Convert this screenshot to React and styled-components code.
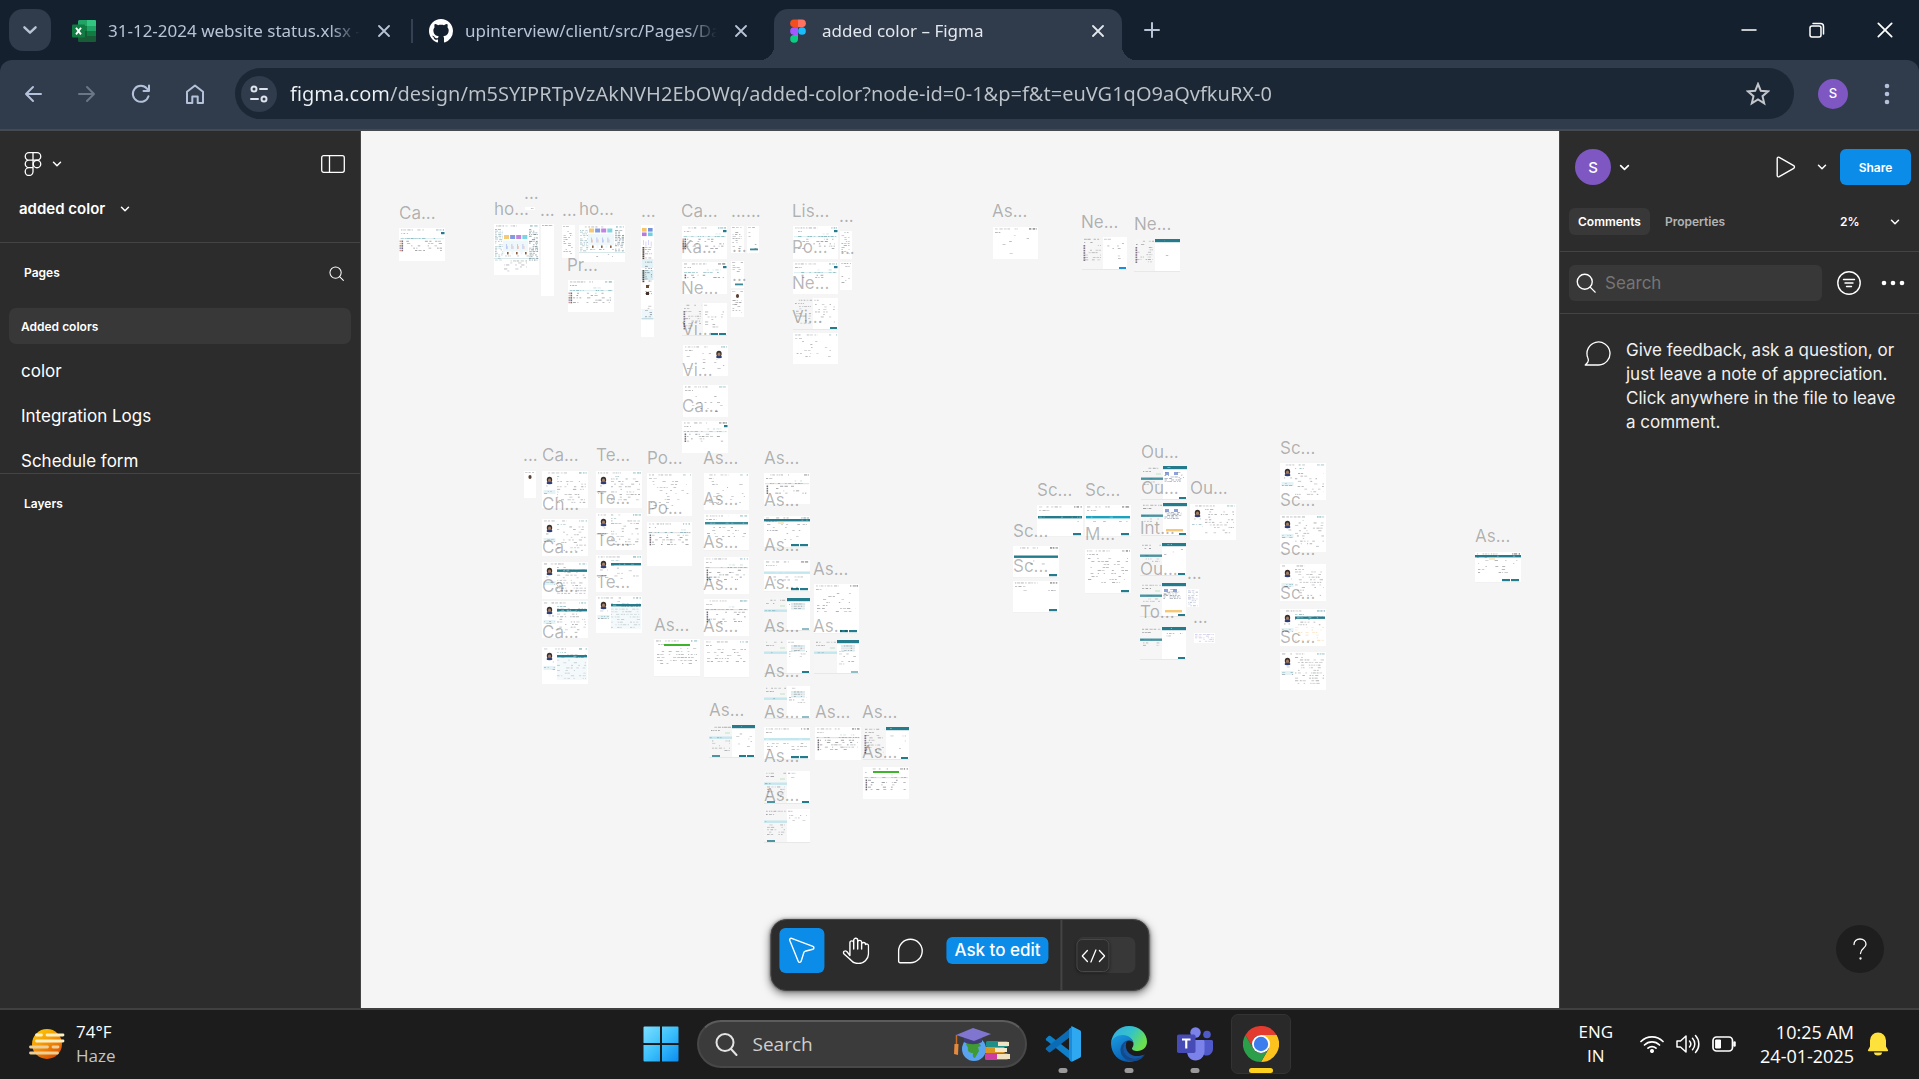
import React from "react";
import styled, { createGlobalStyle } from "styled-components";

const GlobalStyle = createGlobalStyle`
  * { box-sizing: border-box; }
  body { margin: 0; background: #1c1c1c; overflow: hidden; }
  button, input, select { font: inherit; color: inherit; }
  svg { display: block; flex: none; }
`;

const SYSTEM = `"Open Sans", "Noto Sans", sans-serif`;
const CHROME = `"Noto Sans", "Open Sans", sans-serif`;
const UI = `Inter, "Liberation Sans", sans-serif`;

/* ---------- shared ---------- */

const Screen = styled.div`
  height: 100vh;
  display: flex;
  flex-direction: column;
  font-family: ${UI};
`;

const IconButton = styled.button`
  border: 0;
  padding: 0;
  background: ${(p) => p.$bg || "none"};
  width: ${(p) => p.$w || 36}px;
  height: ${(p) => p.$h || 36}px;
  border-radius: ${(p) => p.$radius || 0}px;
  display: flex;
  align-items: center;
  justify-content: center;
  flex: none;
`;

const Icon = ({ w = 24, h = w, box, sw = 1.5, color = "currentColor", children }) => (
  <svg
    width={w}
    height={h}
    viewBox={box || `0 0 ${w} ${h}`}
    fill="none"
    stroke={color}
    strokeWidth={sw}
    strokeLinecap="round"
    strokeLinejoin="round"
    aria-hidden="true"
  >
    {children}
  </svg>
);

const Chevron = ({ w = 10, sw = 1.5 }) => (
  <Icon w={w} h={w} box="0 0 10 10" sw={sw}>
    <path d="M1.500 3.300 5 6.700l3.500-3.400" />
  </Icon>
);

const Cross = ({ w = 12, sw = 1.8 }) => (
  <Icon w={w} box="0 0 12 12" sw={sw}>
    <path d="M1 1l10 10M11 1 1 11" />
  </Icon>
);

/* ---------- browser chrome ---------- */

const TitleBar = styled.header`
  height: 60px;
  flex: none;
  display: flex;
  align-items: flex-start;
  padding: 9px 0 0 9px;
  background: #15202f;
  color: #b9c3d6;
  font-family: ${CHROME};
`;

const TabStrip = styled.nav`
  display: flex;
  gap: 9px;
  margin: 0 9px;
`;

const Tab = styled.div`
  position: relative;
  width: 348px;
  height: 51px;
  padding: 0 12px 8px;
  display: flex;
  align-items: center;
  gap: 12px;
  border-radius: 14px 14px 0 0;
  background: ${(p) => (p.$active ? "#303b4b" : "none")};
  color: ${(p) => (p.$active ? "#e3e7ee" : "#b9c3d6")};

  &::before,
  &::after {
    content: "";
    display: ${(p) => (p.$active ? "block" : "none")};
    position: absolute;
    bottom: 0;
    width: 14px;
    height: 14px;
  }
  &::before {
    right: 100%;
    background: radial-gradient(circle at 0 0, transparent 14px, #303b4b 14px);
  }
  &::after {
    left: 100%;
    background: radial-gradient(circle at 100% 0, transparent 14px, #303b4b 14px);
  }
`;

const TabDivider = styled.i`
  width: 2px;
  height: 24px;
  margin: 10px -5px 0 -6px;
  background: #344154;
`;

const TabTitle = styled.span`
  flex: 1;
  overflow: hidden;
  white-space: nowrap;
  font-size: 17px;
  line-height: 24px;
  mask-image: linear-gradient(to right, #000 88%, transparent 100%);
`;

const WindowControls = styled.div`
  display: flex;
  margin-left: auto;
  color: #fff;
`;

const Toolbar = styled.div`
  background: #15202f;
  flex: none;
  color: #b3c2da;
  font-family: ${CHROME};
`;

const ToolbarInner = styled.div`
  height: 71px;
  display: flex;
  align-items: center;
  padding: 0 14px 2px 6px;
  border-bottom: 2px solid #454a50;
  border-radius: 12px 12px 0 0;
  background: #303b4b;
`;

const AddressBar = styled.div`
  flex: 1;
  height: 51px;
  margin: 0 21px 0 13px;
  padding: 0 18px 0 6px;
  border-radius: 26px;
  background: #1b2734;
  display: flex;
  align-items: center;
  gap: 13px;
`;

const UrlInput = styled.input`
  flex: 1;
  min-width: 0;
  border: 0;
  padding: 0;
  outline: 0;
  font-size: 20px;
  line-height: 30px;
  color: transparent;
  background: linear-gradient(to right, #eef1f5 98px, #bdc3ca 98px);
  background-clip: text;
  -webkit-background-clip: text;
`;

const MenuButton = styled(IconButton)`
  margin-left: 18px;
`;

const Avatar = styled.span`
  width: ${(p) => p.$size}px;
  height: ${(p) => p.$size}px;
  border-radius: 50%;
  background: #7e57c2;
  color: #fff;
  display: flex;
  align-items: center;
  justify-content: center;
  font: 500 ${(p) => p.$font}px/1 ${UI};
`;

const ExcelIcon = () => (
  <svg width="24" height="24" viewBox="0 0 24 24">
    <path d="M7 1h8v6H6V2z" fill="#21a366" />
    <path d="M15 1h8a1 1 0 0 1 1 1v5h-9z" fill="#33c481" />
    <path d="M6 7h9v5H6z" fill="#107c41" />
    <path d="M15 7h9v5h-9z" fill="#21a366" />
    <path d="M6 12h9v6H6z" fill="#185c37" />
    <path d="M15 12h9v5h-9z" fill="#107c41" />
    <path d="M6 17h18v5a1 1 0 0 1-1 1H7a1 1 0 0 1-1-1z" fill="#185c37" />
    <rect x="0" y="5.500" width="13" height="13" rx="1" fill="#107c41" />
    <path d="M4 8.800l5 6.600M9 8.800l-5 6.600" stroke="#fff" strokeWidth="1.900" />
  </svg>
);

const GithubIcon = () => (
  <svg width="24" height="24" viewBox="0 0 16 16" fill="#fff">
    <path d="M8 0C3.580 0 0 3.580 0 8c0 3.540 2.290 6.530 5.470 7.590.4.070.55-.17.55-.38 0-.19-.01-.82-.01-1.490-2.010.37-2.530-.49-2.690-.94-.09-.23-.48-.94-.82-1.130-.28-.15-.68-.52-.01-.53.63-.01 1.080.58 1.230.82.72 1.210 1.870.87 2.330.66.07-.52.28-.87.51-1.070-1.780-.2-3.640-.89-3.640-3.950 0-.87.31-1.590.82-2.150-.08-.2-.36-1.020.08-2.120 0 0 .67-.21 2.200.82.64-.18 1.320-.27 2-.27s1.360.09 2 .27c1.530-1.040 2.200-.82 2.200-.82.44 1.100.16 1.920.08 2.120.51.56.82 1.270.82 2.150 0 3.070-1.870 3.750-3.650 3.950.29.25.54.73.54 1.480 0 1.070-.01 1.930-.01 2.200 0 .21.15.46.55.38A8.010 8.010 0 0 0 16 8c0-4.420-3.580-8-8-8z" />
  </svg>
);

const FigmaColorIcon = () => (
  <svg width="24" height="24" viewBox="0 0 24 24">
    <path d="M8 .5h4v7.700H8a3.850 3.850 0 0 1 0-7.700z" fill="#f24e1e" />
    <path d="M12 .5h4a3.850 3.850 0 0 1 0 7.700h-4z" fill="#ff7262" />
    <path d="M8 8.200h4v7.700H8a3.850 3.850 0 0 1 0-7.700z" fill="#a259ff" />
    <circle cx="16" cy="12" r="3.850" fill="#1abcfe" />
    <path d="M8 15.900h4v3.800a3.900 3.900 0 1 1-4-3.800z" fill="#0acf83" />
  </svg>
);

const TABS = [
  { title: "31-12-2024 website status.xlsx -", icon: <ExcelIcon /> },
  { title: "upinterview/client/src/Pages/Da", icon: <GithubIcon /> },
  { title: "added color – Figma", icon: <FigmaColorIcon />, active: true },
];

function Browser() {
  return (
    <>
      <TitleBar>
        <IconButton $w={42} $h={42} $radius={14} $bg="#303b4b" aria-label="Search tabs">
          <Chevron w={16} />
        </IconButton>
        <TabStrip>
          {TABS.map((t, i) => (
            <React.Fragment key={t.title}>
              {i === 1 && <TabDivider />}
              <Tab $active={t.active}>
                {t.icon}
                <TabTitle>{t.title}</TabTitle>
                <IconButton $w={24} $h={24} aria-label="Close tab">
                  <Cross />
                </IconButton>
              </Tab>
            </React.Fragment>
          ))}
        </TabStrip>
        <IconButton $w={42} $h={42} aria-label="New tab">
          <Icon w={16} sw={2}>
            <path d="M8 1v14M1 8h14" />
          </Icon>
        </IconButton>
        <WindowControls>
          <IconButton $w={68} $h={42} aria-label="Minimise">
            <Icon w={16}>
              <path d="M1 8h14" />
            </Icon>
          </IconButton>
          <IconButton $w={68} $h={42} aria-label="Restore">
            <Icon w={16}>
              <rect x="1" y="4" width="11" height="11" rx="2" />
              <path d="M4 1.500h7.500a3 3 0 0 1 3 3V12" />
            </Icon>
          </IconButton>
          <IconButton $w={68} $h={42} aria-label="Close window">
            <Cross w={16} sw={1.3} />
          </IconButton>
        </WindowControls>
      </TitleBar>
      <Toolbar>
        <ToolbarInner>
          <IconButton $w={54} aria-label="Back">
            <Icon w={18} sw={2}>
              <path d="M17 9H2M9 2 2 9l7 7" />
            </Icon>
          </IconButton>
          <IconButton $w={54} aria-label="Forward">
            <Icon w={18} sw={2} color="#6b7687">
              <path d="M1 9h15M9 2l7 7-7 7" />
            </Icon>
          </IconButton>
          <IconButton $w={54} aria-label="Reload">
            <Icon w={20} sw={2}>
              <path d="M17.500 12.200A8 8 0 1 1 16 4.700l1.700 2M18 1.500v5.500h-5.500" />
            </Icon>
          </IconButton>
          <IconButton $w={54} aria-label="Home">
            <Icon w={20} sw={2}>
              <path d="M2 7.800 10 1.500l8 6.300V19h-5.300v-6.500H7.300V19H2z" />
            </Icon>
          </IconButton>
          <AddressBar>
            <IconButton $radius={18} $bg="#303b4b" aria-label="Site information">
              <Icon w={20} sw={2} color="#dde3ec">
                <circle cx="5" cy="5" r="2.500" />
                <path d="M11 5h7M2 15h7" />
                <circle cx="15" cy="15" r="2.500" />
              </Icon>
            </IconButton>
            <UrlInput
              aria-label="Address"
              spellCheck={false}
              defaultValue="figma.com/design/m5SYIPRTpVzAkNVH2EbOWq/added-color?node-id=0-1&p=f&t=euVG1qO9aQvfkuRX-0"
            />
            <IconButton aria-label="Bookmark this page">
              <Icon w={24} sw={2} color="#c3c7cc">
                <path
                  d="M12 2l2.800 6.800 7.200.6-5.500 4.800 1.700 7.100L12 17.500l-6.200 3.800 1.700-7.100L2 9.400l7.200-.6z"
                  strokeLinejoin="miter"
                />
              </Icon>
            </IconButton>
          </AddressBar>
          <IconButton aria-label="Profile">
            <Avatar $size={30} $font={13}>S</Avatar>
          </IconButton>
          <MenuButton aria-label="Browser menu">
            <svg width="6" height="22" viewBox="0 0 6 22" fill="#b3c2da">
              <circle cx="3" cy="3" r="2.300" />
              <circle cx="3" cy="11" r="2.300" />
              <circle cx="3" cy="19" r="2.300" />
            </svg>
          </MenuButton>
        </ToolbarInner>
      </Toolbar>
    </>
  );
}

/* ---------- editor shell ---------- */

const Editor = styled.main`
  flex: 1;
  min-height: 0;
  display: flex;
  color: #fff;
`;

const SidePanel = styled.aside`
  width: ${(p) => (p.$side === "left" ? 361 : 360)}px;
  flex: none;
  display: flex;
  flex-direction: column;
  background: #2c2c2c;
  border: 0 solid #444;
  border-${(p) => (p.$side === "left" ? "right" : "left")}-width: 1px;
`;

const Row = styled.div`
  display: flex;
  align-items: center;
  justify-content: ${(p) => (p.$spread ? "space-between" : "flex-start")};
  gap: ${(p) => p.$gap || 0}px;
`;

const FileHead = styled.div`
  height: 112px;
  flex: none;
  border-bottom: 1px solid #444;
  padding: 15px 9px 0 19px;
`;

const MenuTrigger = styled.button`
  border: 0;
  padding: 0;
  background: none;
  display: flex;
  align-items: center;
  gap: ${(p) => p.$gap || 10}px;
  height: 36px;
  padding-left: ${(p) => p.$indent || 0}px;
`;

const FileName = styled.span`
  font-size: 15px;
  font-weight: 600;
  line-height: 24px;
`;

const FileRow = styled(Row)`
  margin-top: 9px;
`;

const PagesSection = styled.section`
  height: 231px;
  flex: none;
  overflow: hidden;
  border-bottom: 1px solid #444;
`;

const SectionHead = styled.div`
  height: 60px;
  padding: 0 11px 0 24px;
  display: flex;
  align-items: center;
  justify-content: space-between;
`;

const SectionTitle = styled.h2`
  margin: 0;
  font-size: 12px;
  font-weight: 600;
  line-height: 24px;
`;

const PageList = styled.ul`
  list-style: none;
  margin: 0;
  padding: 5px 9px 0;
  display: flex;
  flex-direction: column;
  gap: 9px;
`;

const PageItem = styled.button`
  display: block;
  width: 100%;
  height: 36px;
  border: 0;
  padding: 0 12px;
  text-align: left;
  border-radius: 7px;
  background: ${(p) => (p.$active ? "#383838" : "none")};
  font-size: ${(p) => (p.$active ? 12 : 17)}px;
  font-weight: ${(p) => (p.$active ? 600 : 400)};
`;

const SearchGlyph = ({ w = 15, sw = 1.1 }) => (
  <Icon w={w} box="0 0 16 16" sw={sw}>
    <circle cx="7" cy="7" r="6" />
    <path d="m11.300 11.300 4 4" />
  </Icon>
);

function LeftPanel() {
  return (
    <SidePanel $side="left">
      <FileHead>
        <Row $spread>
          <MenuTrigger $gap={10} $indent={5} aria-label="Main menu">
            <Icon w={18} h={24} sw={1.3}>
              <path d="M9 .7H5a3.750 3.750 0 0 0 0 7.500h4zM9 .7h4a3.750 3.750 0 0 1 0 7.500H9zM9 8.200H5a3.750 3.750 0 0 0 0 7.500h4zM5 15.700h4v3.800a3.900 3.900 0 1 1-4-3.800z" />
              <circle cx="13" cy="12" r="3.750" />
            </Icon>
            <Chevron />
          </MenuTrigger>
          <IconButton aria-label="Toggle panels">
            <Icon w={24} h={18} sw={1.3}>
              <rect x=".7" y=".7" width="22.600" height="16.600" rx="2" />
              <path d="M8.500 1v16" />
            </Icon>
          </IconButton>
        </Row>
        <FileRow>
          <MenuTrigger $gap={15}>
            <FileName>added color</FileName>
            <Chevron />
          </MenuTrigger>
        </FileRow>
      </FileHead>
      <PagesSection>
        <SectionHead>
          <SectionTitle>Pages</SectionTitle>
          <IconButton $w={26} aria-label="Find">
            <SearchGlyph />
          </IconButton>
        </SectionHead>
        <PageList>
          {["Added colors", "color", "Integration Logs", "Schedule form"].map((p, i) => (
            <li key={p}>
              <PageItem $active={i === 0}>{p}</PageItem>
            </li>
          ))}
        </PageList>
      </PagesSection>
      <SectionHead>
        <SectionTitle>Layers</SectionTitle>
      </SectionHead>
    </SidePanel>
  );
}

const RightHead = styled.div`
  height: 121px;
  flex: none;
  border-bottom: 1px solid #444;
  padding: 18px 8px 0 9px;
`;

const ShareButton = styled.button`
  width: 71px;
  height: 36px;
  border: 0;
  border-radius: 6px;
  background: #0c8ce9;
  font-size: 12px;
  font-weight: 600;
`;

const TabRow = styled(Row)`
  margin-top: 23px;
`;

const PanelTab = styled.button`
  height: 27px;
  border: 0;
  padding: 0 9px;
  border-radius: 6px;
  background: ${(p) => (p.$active ? "#383838" : "none")};
  color: ${(p) => (p.$active ? "#fff" : "#b3b3b3")};
  font-size: 12px;
  font-weight: 600;
`;

const ZoomField = styled.label`
  display: flex;
  align-items: center;
  gap: 30px;
  padding-right: 11px;
`;

const ZoomSelect = styled.select`
  appearance: none;
  border: 0;
  padding: 0;
  background: none;
  font-size: 12px;
  font-weight: 600;
  line-height: 24px;
`;

const SearchRow = styled(Row)`
  height: 62px;
  flex: none;
  padding: 0 0 0 9px;
  border-bottom: 1px solid #444;
`;

const SearchField = styled.label`
  flex: 1;
  min-width: 0;
  height: 36px;
  margin-right: 9px;
  padding: 0 7px;
  border-radius: 6px;
  background: #383838;
  display: flex;
  align-items: center;
  gap: 9px;
`;

const SearchInput = styled.input`
  flex: 1;
  min-width: 0;
  border: 0;
  padding: 0;
  outline: 0;
  background: none;
  font-size: ${(p) => p.$size || 17}px;
  &::placeholder {
    color: ${(p) => p.$placeholder || "#757575"};
    opacity: 1;
  }
`;

const EmptyState = styled.div`
  display: flex;
  align-items: flex-start;
  gap: 15px;
  padding: 24px 16px 0 24px;
`;

const EmptyText = styled.p`
  margin: 0;
  font-size: 17px;
  line-height: 24px;
  color: #f0f0f0;
`;

const BubbleBox = styled.span`
  padding-top: 3px;
`;

const HelpCorner = styled.div`
  margin: auto 35px 35px auto;
`;

const PlayGroup = styled.div`
  display: flex;
  align-items: center;
  margin-left: auto;
`;

function RightPanel() {
  return (
    <SidePanel $side="right">
      <RightHead>
        <Row>
          <MenuTrigger $gap={8} $indent={6} aria-label="Account">
            <Avatar $size={36} $font={15}>S</Avatar>
            <Chevron w={11} />
          </MenuTrigger>
          <PlayGroup>
            <IconButton aria-label="Present">
              <Icon w={20} h={22} sw={1.4}>
                <path d="M1.200 2.500v17c0 1.200 1 1.700 2 1.200l14.500-8.400c1-.6 1-2 0-2.600L3.200 1.300c-1-.5-2 0-2 1.200z" />
              </Icon>
            </IconButton>
            <IconButton aria-label="Present options">
              <Chevron />
            </IconButton>
            <ShareButton>Share</ShareButton>
          </PlayGroup>
        </Row>
        <TabRow $spread>
          <Row $gap={6}>
            <PanelTab $active>Comments</PanelTab>
            <PanelTab>Properties</PanelTab>
          </Row>
          <ZoomField>
            <ZoomSelect aria-label="Zoom level" defaultValue="2%">
              <option>2%</option>
            </ZoomSelect>
            <Chevron />
          </ZoomField>
        </TabRow>
      </RightHead>
      <SearchRow>
        <SearchField>
          <SearchGlyph w={20} />
          <SearchInput placeholder="Search" aria-label="Search comments" />
        </SearchField>
        <IconButton aria-label="Filter">
          <Icon w={24} sw={1.4}>
            <circle cx="12" cy="12" r="11.200" />
            <path d="M6.500 8.500h11M8 12h8M9.500 15.500h5" />
          </Icon>
        </IconButton>
        <IconButton $w={52} aria-label="More">
          <svg width="24" height="6" viewBox="0 0 24 6" fill="#fff">
            <circle cx="3" cy="3" r="2.300" />
            <circle cx="12" cy="3" r="2.300" />
            <circle cx="21" cy="3" r="2.300" />
          </svg>
        </IconButton>
      </SearchRow>
      <EmptyState>
        <BubbleBox>
          <Icon w={27} h={25} sw={1.3}>
            <path d="M3.700 16.500A11.500 11.500 0 1 1 14.800 24H1.200c1.900-1.400 3.200-3 3.200-4.700 0-1-.3-1.800-.7-2.800z" />
          </Icon>
        </BubbleBox>
        <EmptyText>
          Give feedback, ask a question, or just leave a note of appreciation. Click anywhere in the file to leave a
          comment.
        </EmptyText>
      </EmptyState>
      <HelpCorner>
        <IconButton $w={48} $h={48} $radius={24} $bg="#1e1e1e" aria-label="Help">
          <Icon w={14} h={22} sw={1.3}>
            <path d="M1 6.500C1 3.200 3.500 1 7 1s6 2.200 6 5.300C13 10.500 7.500 10 7.500 15.500" />
            <circle cx="7.500" cy="20.500" r=".5" />
          </Icon>
        </IconButton>
      </HelpCorner>
    </SidePanel>
  );
}

/* ---------- canvas ---------- */

const Canvas = styled.section`
  position: relative;
  flex: 1;
  min-width: 0;
  overflow: hidden;
  background: #f5f5f5;
`;

const FrameNode = styled.svg`
  position: absolute;
  left: ${(p) => p.$x}px;
  top: ${(p) => p.$y}px;
  background: #fff;
`;

const FrameLabel = styled.span`
  position: absolute;
  left: ${(p) => p.$x}px;
  top: ${(p) => p.$y}px;
  font-size: 17px;
  line-height: 24px;
  color: rgba(0, 0, 0, 0.29);
  white-space: nowrap;
`;

const TEAL = "#237b8b";
const DARK = "#4a4f55";
const PALE = "#d8ecf0";

function makeRandom(seed) {
  let s = (seed * 7919 + 13) % 2147483647;
  return () => {
    s = (s * 16807) % 2147483647;
    return s / 2147483647;
  };
}

/* Thin broken strokes that stand for unreadable text. */
function textLine(rand, x, y, w, density, color, opacity, key) {
  const bits = [];
  let cx = x;
  let n = 0;
  while (cx < x + w) {
    const len = 1 + rand() * 2.4;
    if (rand() < density)
      bits.push(
        <rect
          key={`${key}-${n}`}
          x={cx}
          y={y}
          width={Math.min(len, x + w - cx)}
          height="0.9"
          fill={color}
          opacity={opacity * (0.5 + rand() * 0.5)}
        />
      );
    cx += len + 0.5 + rand() * 1.2;
    n += 1;
  }
  return bits;
}

const AVATAR_ROW = ["#c9785f", "#e8a14c", "#7f5a4c", "#5c6ca8", "#d6605f"];

function drawFrame(kind, w, h, seed, opt) {
  const r = makeRandom(seed);
  const out = [];
  const line = (x, y, lw, d = 0.6, c = DARK, o = 0.5) => out.push(...textLine(r, x, y, lw, d, c, o, out.length));
  const box = (x, y, bw, bh, fill, opacity = 1) =>
    out.push(<rect key={`b${out.length}`} x={x} y={y} width={bw} height={bh} fill={fill} opacity={opacity} />);
  const oval = (cx, cy, rx, ry, fill) =>
    out.push(<ellipse key={`e${out.length}`} cx={cx} cy={cy} rx={rx} ry={ry} fill={fill} />);
  const head = () => {
    line(2, 1.5, w * 0.5, 0.8);
    line(w - 9, 1.5, 8, 0.9, opt.dark ? "#000" : TEAL, 0.8);
  };
  const face = (x, y) => {
    oval(x + 3, y + 2.8, 2.7, 3, "#3a302c");
    oval(x + 3, y + 3.4, 1.5, 2, "#a87e62");
    oval(x + 3, y + 6, 3, 1.3, "#2d3f74");
  };

  if (kind === "table") {
    head();
    line(2, 5, 7, 0.9);
    if (opt.button) box(w - 4, 4, 3.5, 2.2, TEAL);
    line(w * 0.55, 7.5, 14, 0.5, TEAL, 0.3);
    box(1, 10, w - 2, 1.2, opt.band || PALE, 0.8);
    line(2, 10, w - 4, 0.7, TEAL, 0.5);
    const rows = opt.rows || 5;
    const people = opt.color || opt.band === "#ddd" || opt.dark;
    for (let i = 0; i < rows; i += 1) {
      const y = 12.5 + i * 2.3;
      if (opt.color) box(0.5, y, 1.8, 1.5, AVATAR_ROW[i % 5], 0.7);
      if (people) box(2.6, y, 1.5, 1.6, "#54495a", 0.8);
      line(5, y + 0.3, w - 8, 0.35, DARK, 0.6);
    }
    if (opt.green) box(10, 4, 26, 2, "#3fb32c");
  } else if (kind === "page") {
    head();
    line(2, 5, 8, 0.8);
    for (let y = 8; y < h - 5; y += 3) line(3 + r() * 3, y, w - 9, opt.d || 0.28, DARK, 0.45);
    if (opt.face) face(w - 12, 6);
  } else if (kind === "dash") {
    head();
    for (let y = 5; y < h * 0.7; y += 1.7) {
      line(1, y, 8, 0.8, "#5d8f9b", 0.6);
      line(w - 10, y, 9, 0.8, "#3b5964", 0.7);
    }
    const top = opt.swap ? 3.5 : 11;
    ["#f4c467", "#7790dc", "#b878dc", "#6fd0e0"].forEach((c, i) => box(10 + i * 6.1, top, 5, 4, c, 0.9));
    box(9, top + 5.5, w - 20, 14, "#eef7f9");
    for (let i = 0; i < 4; i += 1) {
      box(12 + i * 5.5, top + 9, 0.8, 5, "#9aa5ec", 0.7);
      box(13.2 + i * 5.5, top + 11, 0.7, 3, "#e9a89a", 0.7);
    }
    for (let i = 0; i < 3; i += 1) {
      box(10.5 + i * 9, top + 16.5, 7, 6, "#fff");
      box(13 + i * 9, top + 17, 1.6, 2.4, "#8a5f3d");
      line(11 + i * 9, top + 20.5, 6, 0.9);
    }
    box(0, top + 23.5, w, 0.5, TEAL, 0.35);
    for (let y = top + 25.5; y < Math.min(h - 4, top + 36); y += 2) line(10, y, w - 22, 0.3);
  } else if (kind === "mobile") {
    line(1, 1, w - 2, 0.7, DARK, 0.5);
    if (opt.face) oval(w / 2, 6, 1.6, 2, "#5a4032");
    for (let y = opt.face ? 10 : 4; y < h - 4; y += 2) line(1.5, y, w - 4, opt.d || 0.45, DARK, 0.55);
    if (opt.button) box(w - 9, h - 4.5, 8, 1.8, TEAL, 0.9);
  } else if (kind === "long") {
    ["#f4c467", "#7790dc", "#b878dc", "#6fd0e0"].forEach((c, i) =>
      box(1 + (i % 2) * 6, 3 + Math.floor(i / 2) * 4.5, 4.6, 3.6, c)
    );
    for (let i = 0; i < 4; i += 1) box(2 + i * 2.6, 15 + (i % 2) * 1.5, 0.7, 5, "#a7a0ec", 0.6);
    box(0.5, 34, w - 1, 9, "#e3f2f6");
    box(0.5, 45, w - 1, 10, "#d9edf2");
    box(0.5, 84, w - 1, 9, "#edf6fa");
    for (let y = 22; y < 92; y += 2.1) {
      line(4, y, w - 6, 0.5, y > 44 && y < 56 ? "#245" : DARK, 0.6);
      if ((y > 21 && y < 33) || (y > 44 && y < 56)) box(1.5, y, 1.8, 1.6, "#54423a");
    }
    box(5, 60, 3, 3, "#6b4a35");
    box(5, 67, 3, 3, "#42302a");
    box(0.5, 93.5, w - 1, 0.7, "#86b9c4");
  } else if (kind === "split") {
    const mid = opt.mid || w * 0.5;
    box(0, 0, mid, h - 1, "#f6f6f6");
    line(2, 1.8, mid - 3, 0.7);
    line(2, 5, 9, 0.9, DARK, 0.6);
    if (opt.band) {
      box(0, 11.5, mid, 2.4, opt.band);
      line(1, 12.2, mid * 0.5, 0.5, TEAL, 0.5);
      if (r() > 0.3) box(mid - 7, 7.5, 5, 1, "#a8dcae", 0.7);
    }
    for (let y = opt.band ? 15.5 : 8; y < (opt.left || h - 7); y += 2.4) {
      line(3, y, mid - 5, 0.5, DARK, 0.45);
      if (opt.people) box(1.5, y, 1.7, 1.6, "#77667e", 0.9);
    }
    if (opt.header) {
      box(mid, 0, w - mid, 3.2, TEAL);
      line(mid + 2, 1, 8, 0.5, "#fff", 0.6);
    } else line(mid + 1, 1.8, 8, 0.8);
    for (let y = 6; y < (opt.right || h - 8); y += 2.5) line(mid + 2, y, w - mid - 5, opt.d || 0.3, DARK, 0.45);
    if (opt.panel) {
      for (let i = 0; i < 3; i += 1) {
        box(mid + 4, 5 + i * 2.3, 14, 1.9, i % 2 ? "#e6e6e6" : PALE);
        line(mid + 7, 5.5 + i * 2.3, 8, 0.8, DARK, 0.5);
      }
    }
    if (opt.cards) {
      box(mid + 2, 6, 4, 3, "#6079c9", 0.7);
      box(mid + 11, 6, 4, 3, "#6079c9", 0.7);
      for (let y = 9; y < 16; y += 1.5) line(mid + 1.5, y, 17, 0.75, "#40506e", 0.6);
    }
    if (opt.orange) box(mid + 3, h - 7, 17, 2.4, "#f5c878");
    const b = opt.button || TEAL;
    if (opt.buttons === 2) box(w - 16, h - 3, 7, 2, b);
    if (opt.buttons) box(w - 8, h - 3, 7, 2, b, opt.soft ? 0.5 : 1);
    if (opt.leftButton) box(3, h - 3, 8, 2, TEAL, 0.8);
    box(0, h - 0.6, w, 0.6, "#d9d9d9");
  } else if (kind === "profile") {
    head();
    face(4.5, 6);
    line(4, 14.5, 8, 0.5, DARK, 0.5);
    if (!opt.plain) box(1.5, 19, 12, 4, "#e6f3f6");
    line(2, 20, 11, 0.6, TEAL, 0.45);
    line(2, 22, 11, 0.5, DARK, 0.5);
    line(15, 5, 9, 0.7, TEAL, 0.5);
    for (let y = 7.5; y < h - 6; y += 2.6)
      line(15, y, w - 17, opt.d || 0.4, opt.warm && y > 16 ? "#f0b65e" : DARK, 0.5);
    if (opt.bar) {
      box(15, opt.bar, w - 16, 2.4, TEAL);
      line(17, opt.bar + 0.8, w - 22, 0.2, "#9cc8d0", 1);
    }
    if (opt.tint) box(15, opt.bar + 3, w - 16, 22, "#e3f2f5", 0.4);
  } else if (kind === "form") {
    head();
    line(2, 5, 11, 0.85);
    if (opt.bar) {
      box(opt.inset || 0, opt.bar, w - 2 * (opt.inset || 0), 2.4, opt.fill || TEAL);
      line(2, opt.bar + 0.7, w - 4, 0.15, "#fff", 0.5);
    }
    for (let y = (opt.bar || 4) + 5; y < (opt.end || h - 8); y += 3) line(3, y, w - 6, opt.d || 0.2, DARK, 0.5);
    if (opt.green) box(10, opt.green, 26, 2, "#3fb32c");
    if (opt.orange) box(14, 6.5, 6, 1, "#f5d58a");
    if (opt.buttons === 2) box(w - 19, h - 4, 8, 2.2, TEAL);
    if (opt.buttons) box(w - 10, h - 4, 8, 2.2, TEAL);
    box(0, h - 0.5, w, 0.5, "#e2e2e2");
  } else if (kind === "scribble") {
    for (let y = 1; y < h - 1; y += 1.7) line(1, y, w - 2, 0.75, opt.ink || "#5b6fa0", 0.5);
  }
  return out;
}

const SKY = "#c4e6ee";

/* x, y, width, height, kind, options */
const FRAMES = [
  [399, 228, 46, 33, "table", { color: 1, button: 1 }],
  [494, 224, 45, 51, "dash", {}],
  [525, 207, 10, 3, "scribble", { ink: DARK }],
  [541, 224, 13, 72, "mobile", { d: 0.02 }],
  [562, 225, 13, 33, "mobile", {}],
  [579, 225, 46, 37, "dash", { swap: 1 }],
  [568, 280, 46, 32, "table", { color: 1 }],
  [641, 225, 13, 112, "long", {}],
  [682, 226, 45, 33, "table", { color: 1, button: 1 }],
  [731, 226, 13, 27, "mobile", {}],
  [747, 226, 12, 27, "mobile", { d: 0.15, button: 1 }],
  [682, 262, 45, 32, "table", { rows: 2, button: 1, dark: 1, band: "#fff" }],
  [731, 261, 13, 27, "mobile", { button: 1, d: 0.2 }],
  [731, 290, 13, 27, "mobile", { face: 1 }],
  [682, 303, 45, 33, "split", { mid: 21, people: 1, buttons: 2 }],
  [683, 345, 45, 31, "page", { d: 0.18, face: 1 }],
  [683, 385, 45, 32, "page", { d: 0.15 }],
  [682, 421, 46, 32, "table", { button: 1, dark: 1, rows: 4 }],
  [793, 226, 45, 33, "table", { button: 1 }],
  [840, 231, 12, 28, "mobile", {}],
  [793, 262, 45, 32, "table", { button: 1, rows: 2 }],
  [840, 262, 12, 28, "mobile", { d: 0.15 }],
  [793, 298, 45, 32, "split", { mid: 20, buttons: 1 }],
  [793, 333, 45, 31, "page", {}],
  [524, 471, 12, 27, "mobile", { face: 1, d: 0.02 }],
  [542, 471, 46, 37, "profile", {}],
  [542, 519, 46, 37, "profile", {}],
  [542, 562, 46, 37, "profile", { bar: 7.5, d: 0.6 }],
  [542, 601, 46, 37, "profile", { bar: 8 }],
  [542, 647, 46, 37, "profile", { bar: 8, tint: 1 }],
  [596, 471, 46, 37, "profile", { plain: 1 }],
  [596, 513, 46, 37, "profile", { plain: 1 }],
  [596, 555, 46, 37, "profile", { bar: 8, plain: 1, d: 0.1 }],
  [596, 596, 46, 37, "profile", { bar: 8, tint: 1, d: 0.5 }],
  [647, 473, 45, 43, "page", {}],
  [647, 522, 45, 44, "table", { band: "#ddd", rows: 5 }],
  [704, 473, 45, 37, "page", { d: 0.2 }],
  [704, 514, 45, 37, "form", { bar: 8, inset: 1, fill: "#3a8a99", end: 24, d: 0.3 }],
  [704, 557, 45, 37, "table", { band: "#ddd" }],
  [704, 599, 45, 37, "table", { band: "#ddd" }],
  [704, 640, 45, 38, "form", { end: 24, d: 0.5 }],
  [654, 639, 46, 38, "form", { green: 5, end: 26, d: 0.6 }],
  [764, 473, 46, 31, "table", { dark: 1, band: "#ddd", rows: 4 }],
  [764, 516, 46, 32, "form", { bar: 3, orange: 1, buttons: 2 }],
  [764, 560, 46, 32, "form", { bar: 11.5, fill: SKY, dark: 1, end: 20, buttons: 2 }],
  [764, 598, 46, 33, "split", { mid: 23, header: 1, panel: 1, band: SKY, buttons: 1, soft: 1, left: 14, right: 8 }],
  [764, 640, 46, 34, "split", { mid: 23, panel: 1, band: SKY, buttons: 1, left: 14, right: 20 }],
  [764, 686, 46, 33, "split", { mid: 23, panel: 1, band: SKY, buttons: 1, soft: 1, left: 14, right: 18 }],
  [764, 727, 46, 33, "form", { bar: 11, fill: SKY, dark: 1, d: 0.5, buttons: 2 }],
  [764, 771, 46, 33, "split", { mid: 23, band: SKY, buttons: 1, leftButton: 1, right: 10 }],
  [764, 809, 46, 34, "split", { mid: 23, band: SKY, leftButton: 1, right: 12 }],
  [814, 584, 45, 50, "form", { end: 28, buttons: 2, dark: 1 }],
  [814, 640, 45, 34, "split", { mid: 23, header: 1, panel: 1, band: SKY, buttons: 1, soft: 1, left: 14, right: 24 }],
  [709, 725, 46, 33, "split", { mid: 23, header: 1, band: SKY, buttons: 2, leftButton: 1, d: 0.1 }],
  [815, 727, 46, 33, "table", { dark: 1, band: "#ddd" }],
  [863, 727, 46, 33, "split", { mid: 23, header: 1, people: 1, buttons: 1, d: 0.08 }],
  [863, 767, 46, 32, "table", { dark: 1, band: "#e4e4e4", green: 1 }],
  [993, 227, 45, 32, "page", { d: 0.06, dark: 1 }],
  [1082, 237, 45, 33, "split", { mid: 21, people: 1, buttons: 1, button: "#1a8fd8", d: 0.15, left: 23 }],
  [1134, 239, 46, 33, "split", { mid: 21, people: 1, header: 1, d: 0.03, left: 24 }],
  [1037, 505, 46, 32, "form", { bar: 11, inset: 1, end: 18, dark: 1, buttons: 1 }],
  [1085, 505, 46, 32, "form", { bar: 11, inset: 1, fill: "#1ba3bf", end: 18, dark: 1, buttons: 1 }],
  [1013, 546, 46, 32, "form", { bar: 9.5, inset: 1, end: 18, dark: 1, buttons: 1 }],
  [1013, 581, 46, 32, "form", { end: 10, dark: 1, buttons: 1 }],
  [1085, 549, 46, 45, "form", { end: 36, d: 0.3, dark: 1, buttons: 1 }],
  [1141, 466, 46, 34, "split", { mid: 22, header: 1, band: "#4b93a1", cards: 1, buttons: 1, left: 20, right: 12 }],
  [1141, 503, 46, 33, "split", { mid: 22, header: 1, band: "#4b93a1", cards: 1, orange: 1, buttons: 1, left: 20, right: 12 }],
  [1140, 543, 46, 33, "split", { mid: 22, header: 1, band: "#4b93a1", buttons: 1, left: 20, right: 12 }],
  [1140, 583, 46, 34, "split", { mid: 22, header: 1, band: "#4b93a1", cards: 1, orange: 1, buttons: 1, left: 20, right: 12 }],
  [1140, 627, 46, 33, "split", { mid: 22, header: 1, band: "#4b93a1", buttons: 1, left: 20, right: 10 }],
  [1190, 504, 46, 36, "profile", { plain: 1 }],
  [1187, 589, 12, 18, "scribble", {}],
  [1194, 633, 21, 10, "scribble", { ink: "#9d8fd0" }],
  [1280, 463, 46, 37, "profile", { d: 0.3 }],
  [1280, 515, 46, 37, "profile", { d: 0.35 }],
  [1280, 564, 46, 37, "profile", { d: 0.4 }],
  [1280, 609, 46, 37, "profile", { bar: 7.5, warm: 1, d: 0.35 }],
  [1280, 652, 46, 38, "profile", { d: 0.6 }],
  [1475, 552, 46, 31, "form", { bar: 3, orange: 1, dark: 1, buttons: 2 }],
];

/* text, x, y of the label's middle line */
const LABELS = [
  ["Ca...", 399, 213], ["ho...", 494, 209], ["...", 524, 193], ["...", 540, 210], ["...", 562, 210],
  ["ho...", 579, 209], ["Pr...", 567, 265], ["...", 641, 211], ["Ca...", 681, 211], ["...", 731, 211],
  ["...", 746, 211], ["Ka...", 681, 247], ["...", 732, 246], ["Ne...", 681, 288], ["...", 732, 275],
  ["Vi...", 682, 329], ["Vi...", 682, 370], ["Ca...", 682, 406], ["Lis...", 792, 211], ["...", 839, 216],
  ["Po...", 792, 247], ["...", 840, 248], ["Ne...", 792, 283], ["Vi...", 792, 317],
  ["...", 523, 455], ["Ca...", 542, 455], ["Ch...", 542, 504], ["Ca...", 542, 547], ["Ca...", 542, 586],
  ["Ca...", 542, 632], ["Te...", 596, 455], ["Te...", 596, 498], ["Te...", 596, 540], ["Te...", 596, 582],
  ["Po...", 647, 458], ["Po...", 647, 508], ["As...", 703, 458], ["As...", 703, 499], ["As...", 703, 542],
  ["As...", 703, 584], ["As...", 703, 626], ["As...", 654, 625], ["As...", 764, 458], ["As...", 764, 500],
  ["As...", 764, 545], ["As...", 764, 583], ["As...", 764, 626], ["As...", 764, 671], ["As...", 764, 712],
  ["As...", 764, 756], ["As...", 764, 795], ["As...", 813, 569], ["As...", 813, 626], ["As...", 709, 710],
  ["As...", 815, 712], ["As...", 862, 712], ["As...", 862, 752], ["As...", 992, 211], ["Ne...", 1081, 222],
  ["Ne...", 1134, 224], ["Sc...", 1037, 490], ["Sc...", 1085, 490], ["Sc...", 1013, 531], ["Sc...", 1013, 566],
  ["M...", 1085, 534], ["Ou...", 1141, 452], ["Ou...", 1141, 488], ["Int...", 1140, 528], ["Ou...", 1140, 569],
  ["To...", 1140, 612], ["Ou...", 1190, 488], ["...", 1187, 573], ["...", 1193, 617], ["Sc...", 1280, 448],
  ["Sc...", 1280, 500], ["Sc...", 1280, 549], ["Sc...", 1280, 593], ["Sc...", 1280, 637], ["As...", 1475, 536],
];

const ORIGIN = { x: 361, y: 131 };

const Dock = styled.div`
  position: absolute;
  left: 50%;
  bottom: 17px;
  transform: translateX(-50%);
  height: 72px;
  display: flex;
  border-radius: 16px;
  background: #2c2c2c;
  border: 1px solid #454545;
  box-shadow: 0 3px 8px rgba(0, 0, 0, 0.5), 0 0 3px rgba(0, 0, 0, 0.4);
`;

const DockTools = styled.div`
  display: flex;
  align-items: flex-start;
  gap: 9px;
  padding: 8px 12px 0 8px;
  border-right: 2px solid #444;
`;

const AskButton = styled.button`
  height: 27px;
  margin: 9px 0 0 5px;
  padding: 0 8px;
  border: 0;
  border-radius: 6px;
  background: #0c8ce9;
  font-size: 17px;
  font-weight: 500;
  line-height: 27px;
`;

const DevToggle = styled.label`
  position: relative;
  width: 59px;
  height: 36px;
  margin: 17px 13px 0 14px;
`;

const DevInput = styled.input`
  appearance: none;
  display: block;
  width: 59px;
  height: 36px;
  margin: 0;
  border-radius: 7px;
  background: #383838;
`;

const DevKnob = styled.span`
  position: absolute;
  left: 0;
  top: 2px;
  width: 33px;
  height: 33px;
  display: flex;
  align-items: center;
  justify-content: center;
  border-radius: 6px;
  border: 1px solid #484848;
  background: #2c2c2c;
  box-shadow: 0 1px 3px rgba(0, 0, 0, 0.4);
`;

function CanvasArea() {
  return (
    <Canvas>
      {FRAMES.map(([x, y, w, h, kind, opt], i) => (
        <FrameNode key={`${x}-${y}`} $x={x - ORIGIN.x} $y={y - ORIGIN.y} width={w} height={h} viewBox={`0 0 ${w} ${h}`}>
          {drawFrame(kind, w, h, i + 3, opt)}
        </FrameNode>
      ))}
      {LABELS.map(([text, x, y]) => (
        <FrameLabel key={`${x}-${y}`} $x={x - ORIGIN.x} $y={y - ORIGIN.y - 12}>
          {text}
        </FrameLabel>
      ))}
      <Dock>
        <DockTools>
          <IconButton $w={45} $h={45} $radius={6} $bg="#0c8ce9" aria-label="Move">
            <Icon w={27} sw={1.4}>
              <path d="M1.300 3.200c-.4-1.200.7-2.300 1.900-1.900l21.300 8.100c1.400.6 1.300 2.500-.1 2.900l-7.700 2c-.6.200-1 .5-1.200 1.100l-2.800 8.900c-.4 1.300-2.300 1.400-2.800.1z" />
            </Icon>
          </IconButton>
          <IconButton $w={45} $h={45} aria-label="Hand tool">
            <Icon w={27} sw={1.4}>
              <path d="M7.500 15V5.800a1.900 1.900 0 0 1 3.800 0v-2.500a2 2 0 0 1 4 0v2a1.900 1.900 0 0 1 3.900 0v2.200a1.900 1.900 0 0 1 3.900 0a1.800 1.800 0 0 1 3 1v8.500a10 10 0 0 1-10 9.500c-4 0-6.500-1.500-8.800-4.500L1.400 16.700c-1.200-2 1.200-3.700 3-2.200l3.100 4zM11.300 5.500V12M15.300 4.500V12M19.200 5.500V12" />
            </Icon>
          </IconButton>
          <IconButton $w={45} $h={45} aria-label="Comment">
            <Icon w={26} sw={1.4}>
              <path d="M1.200 13A11.800 11.800 0 1 1 13 24.800H2.700c-.8 0-1.500-.7-1.500-1.500z" />
            </Icon>
          </IconButton>
          <AskButton>Ask to edit</AskButton>
        </DockTools>
        <DevToggle>
          <DevInput type="checkbox" aria-label="Dev Mode" />
          <DevKnob>
            <Icon w={24} h={14} sw={1.3}>
              <path d="M6 1.500.8 7 6 12.500M18 1.500 23.200 7 18 12.500M14.500 1 9.500 13" />
            </Icon>
          </DevKnob>
        </DevToggle>
      </Dock>
    </Canvas>
  );
}

/* ---------- taskbar ---------- */

const Taskbar = styled.footer`
  height: 71px;
  flex: none;
  display: grid;
  grid-template-columns: 1fr auto 1fr;
  align-items: center;
  padding-bottom: 2px;
  border-top: 2px solid #404040;
  background: #1c1c1c;
  color: #fff;
  font-family: ${SYSTEM};
  font-size: 17px;
  line-height: 24px;
`;

const Weather = styled.button`
  justify-self: start;
  display: flex;
  align-items: center;
  gap: 10px;
  border: 0;
  padding: 0 0 0 28px;
  background: none;
  text-align: left;
`;

const Stack = styled.span`
  display: flex;
  flex-direction: column;
  align-items: ${(p) => p.$align || "flex-start"};
  font-size: ${(p) => p.$size || 17}px;
`;

const Muted = styled.span`
  color: #c4c4c4;
`;

const Apps = styled.div`
  display: flex;
  align-items: center;
  gap: 6px;
  padding-left: 2px;
`;

const AppButton = styled.button`
  position: relative;
  width: 60px;
  height: 60px;
  border: 1px solid ${(p) => (p.$active ? "#333" : "transparent")};
  border-radius: 7px;
  padding: 0;
  background: ${(p) => (p.$active ? "#292929" : "none")};
  display: flex;
  align-items: center;
  justify-content: center;

  &::after {
    content: "";
    display: ${(p) => (p.$mark ? "block" : "none")};
    position: absolute;
    left: 50%;
    bottom: 0;
    transform: translateX(-50%);
    width: ${(p) => p.$mark || 0}px;
    height: 5px;
    border-radius: 3px;
    background: ${(p) => (p.$active ? "#ffd11f" : "#9a9a9a")};
  }
`;

const TaskSearch = styled.label`
  width: 330px;
  height: 48px;
  padding: 0 14px 0 15px;
  display: flex;
  align-items: center;
  gap: 15px;
  border-radius: 24px;
  border: 2px solid #484848;
  border-top-color: #5c5c5c;
  background: #3b3b3b;
`;

const Tray = styled.div`
  justify-self: end;
  display: flex;
  align-items: center;
  padding-right: 30px;
`;

const TrayButton = styled.button`
  display: flex;
  align-items: center;
  gap: 12px;
  border: 0;
  padding: 0;
  margin-right: ${(p) => p.$after || 0}px;
  background: none;
`;

const HazeIcon = () => (
  <svg width="38" height="32" viewBox="0 0 38 32">
    <defs>
      <linearGradient id="haze" x1="0" y1="0" x2=".6" y2="1">
        <stop offset="0" stopColor="#ffd400" />
        <stop offset=".5" stopColor="#f59a0a" />
        <stop offset="1" stopColor="#dd5200" />
      </linearGradient>
    </defs>
    <circle cx="19" cy="16" r="15" fill="url(#haze)" />
    <g strokeWidth="2.800" strokeLinecap="round" stroke="#ffefc0">
      <path d="M8.500 7h5M19 7h16M8.500 13h26.500" />
      <path d="M2.500 19h17M25 19h5M2.500 25h27" stroke="#ebcf96" />
    </g>
  </svg>
);

const WindowsIcon = () => (
  <svg width="36" height="36" viewBox="0 0 36 36">
    <defs>
      <linearGradient id="win" x1="0" y1="0" x2="36" y2="36" gradientUnits="userSpaceOnUse">
        <stop offset="0" stopColor="#7fe0ff" />
        <stop offset=".5" stopColor="#3cc0fb" />
        <stop offset="1" stopColor="#0a8bf0" />
      </linearGradient>
    </defs>
    <path
      fill="url(#win)"
      d="M1.500.5H17V17H.5V1.500a1 1 0 0 1 1-1zM19 .5h15.500a1 1 0 0 1 1 1V17H19zM.5 19H17v16.500H1.500a1 1 0 0 1-1-1zM19 19h16.500v15.500a1 1 0 0 1-1 1H19z"
    />
  </svg>
);

const BooksIcon = () => (
  <svg width="58" height="34" viewBox="0 0 58 34">
    <rect x="33" y="14" width="22" height="6" rx="1.500" fill="#1f8f8a" />
    <path d="M45 15h11v4H45z" fill="#efe3c4" />
    <rect x="30" y="20" width="22" height="6" rx="1.500" fill="#d9951f" />
    <path d="M42 21h12v4H42z" fill="#f3e8cc" />
    <rect x="32" y="26" width="23" height="7" rx="1.500" fill="#cc3fa0" />
    <path d="M44 27h13v5H44z" fill="#efe0c0" />
    <circle cx="21" cy="22" r="12" fill="#5aa3f0" />
    <path d="M13 17c3-3 7-3 9-1 3-1 5 1 6 3l-3 1 1 4-4 7c-3 0-2-4-2-5-3 0-6-2-5-5z" fill="#3f9a35" />
    <path d="M11 8h18v7c-5 3-13 3-18 0z" fill="#3e3c70" />
    <path d="M3 8 20 1l18 6-17 7z" fill="#8075cf" />
    <path d="M3.500 8v10" stroke="#c46b2a" strokeWidth="1.500" />
    <path d="M1.500 17h4l-.5 11-4-1z" fill="#e58a3a" />
  </svg>
);

const VsCodeIcon = () => (
  <svg width="36" height="36" viewBox="0 0 36 36">
    <path d="M1 12.500 3.500 10c.6-.5 1.300-.5 2 0L27 26.500V35L1.200 14.200c-.6-.6-.6-1.200-.2-1.700z" fill="#0f7fc9" />
    <path d="M1 23.500 3.500 26c.6.500 1.300.5 2 0L27 9.500V1L1.200 21.800c-.6.600-.6 1.200-.2 1.700z" fill="#0b6cb5" />
    <path d="M26 .6c.5-.3 1-.3 1.500 0l7.400 3.600c.7.300 1.100 1 1.100 1.800v24c0 .8-.4 1.500-1.100 1.800l-7.400 3.600c-.6.300-1.100.3-1.600 0z" fill="#2fa8f2" />
    <path d="M27 1v34l-1.500.3L24 33V3z" fill="#1c8cd9" />
  </svg>
);

const EdgeIcon = () => (
  <svg width="36" height="36" viewBox="0 0 36 36">
    <defs>
      <linearGradient id="edgeTop" x1="0" y1="0" x2="1" y2=".5">
        <stop offset="0" stopColor="#35a9e8" />
        <stop offset=".55" stopColor="#34c3c9" />
        <stop offset="1" stopColor="#6be04c" />
      </linearGradient>
      <linearGradient id="edgeBody" x1="0" y1="0" x2=".5" y2="1">
        <stop offset="0" stopColor="#1b9de2" />
        <stop offset="1" stopColor="#0a5fb4" />
      </linearGradient>
    </defs>
    <path d="M0 17C1 7 8.500 0 18 0c10.500 0 18 7.500 18 15.500 0 6-4.500 9.500-9.500 9.500-4 0-5.500-1.500-5.500-2.500s1.500-1.500 1.500-4.500c0-4-4-7.500-9.500-7.500C6 10.500 1 14 0 17z" fill="url(#edgeTop)" />
    <path d="M0 17c1-5 6-8 12-8 5.500 0 10.500 4 10.500 9 0-2-2-3.500-4.500-3.500-3.500 0-6 3.500-6 8C12 29 17 34.500 23 35.300 11 38.500 0 30 0 17z" fill="url(#edgeBody)" />
    <path d="M12 22.500c0 6 5 10.500 11.500 10.500 4.500 0 8-2 10.500-5-2 4.500-6.500 7-11 7.300C15 36 9.500 30 9.500 24c0-4.500 3-8.500 7-9.500-3 1.500-4.500 4.500-4.500 8z" fill="#124a8c" />
    <path d="M12 22.500c0 6 5 10.500 11.500 10.500 4.500 0 7.700-1.500 9.500-4.300-9 3.300-16.500.3-18-7.200-.5-3 0-5 1.500-7-3 1.500-4.500 4.500-4.500 8z" fill="#1558a5" />
  </svg>
);

const TeamsIcon = () => (
  <svg width="36" height="34" viewBox="0 0 36 34">
    <circle cx="18.500" cy="5.500" r="5.200" fill="#7b83eb" />
    <circle cx="30" cy="7.500" r="3.800" fill="#5059c9" />
    <path d="M25 13h9.500c.8 0 1.500.7 1.500 1.500V22a6.500 6.500 0 0 1-9 6z" fill="#5059c9" />
    <path d="M10 13h16c.8 0 1.500.7 1.500 1.500V24c0 5.500-4 9.500-9 9.500S10 29.500 10 24z" fill="#7b83eb" />
    <rect x="0" y="7.500" width="18.500" height="18.500" rx="1.800" fill="#464bb5" />
    <path d="M5 12.500h8.500M9.250 12.500v9" stroke="#fff" strokeWidth="2.200" />
  </svg>
);

const ChromeIcon = () => (
  <svg width="36" height="36" viewBox="0 0 36 36">
    <path d="M18 9h15.600A18 18 0 0 1 18 36l7.800-13.500z" fill="#fcc31e" />
    <path d="M2.400 9A18 18 0 0 1 33.600 9H18a9 9 0 0 0-7.800 13.500z" fill="#e33b2e" />
    <path d="M2.400 9 10.200 22.500A9 9 0 0 0 25.800 22.500L18 36A18 18 0 0 1 2.400 9z" fill="#2c9f4b" />
    <circle cx="18" cy="18" r="9" fill="#fff" />
    <circle cx="18" cy="18" r="7.200" fill="#3b7ded" />
  </svg>
);

function WindowsTaskbar() {
  return (
    <Taskbar>
      <Weather>
        <HazeIcon />
        <Stack>
          <span>74°F</span>
          <Muted>Haze</Muted>
        </Stack>
      </Weather>
      <Apps>
        <AppButton aria-label="Start">
          <WindowsIcon />
        </AppButton>
        <TaskSearch>
          <Icon w={24} sw={2} color="#e4e4e4">
            <circle cx="11" cy="10.500" r="8.500" />
            <path d="m17 17 5.500 6" />
          </Icon>
          <SearchInput $size={19} $placeholder="#cfcfcf" placeholder="Search" aria-label="Search Windows" />
          <BooksIcon />
        </TaskSearch>
        <AppButton $mark={9} aria-label="Visual Studio Code">
          <VsCodeIcon />
        </AppButton>
        <AppButton $mark={9} aria-label="Microsoft Edge">
          <EdgeIcon />
        </AppButton>
        <AppButton $mark={9} aria-label="Microsoft Teams">
          <TeamsIcon />
        </AppButton>
        <AppButton $mark={24} $active aria-label="Google Chrome">
          <ChromeIcon />
        </AppButton>
      </Apps>
      <Tray>
        <TrayButton $after={27}>
          <Stack $align="center">
            <span>ENG</span>
            <span>IN</span>
          </Stack>
        </TrayButton>
        <TrayButton $after={24} aria-label="Network, sound and battery">
          <Icon w={24} h={18} sw={1.7}>
            <path d="M1 6.500a15.500 15.500 0 0 1 22 0M4.500 10a10.500 10.500 0 0 1 15 0M8 13.200a5.800 5.800 0 0 1 8 0" />
            <circle cx="12" cy="16" r="1.200" fill="#fff" />
          </Icon>
          <Icon w={24} h={20} sw={1.5}>
            <path d="M1 7v6h3.500l5.500 5V2L4.500 7zM13.500 7a4.500 4.500 0 0 1 0 6M16.500 4.200a8.500 8.500 0 0 1 0 11.600M19.500 1.500a12.500 12.500 0 0 1 0 17" />
          </Icon>
          <Icon w={24} h={16} sw={1.7}>
            <rect x="1" y="1" width="19.500" height="14" rx="3.500" />
            <rect x="4" y="4" width="4.500" height="8" fill="#fff" stroke="#fff" strokeWidth="1" />
            <path d="M22.500 6.500v3" strokeWidth="2.500" />
          </Icon>
        </TrayButton>
        <TrayButton $after={13}>
          <Stack $align="flex-end" $size={18}>
            <span>10:25 AM</span>
            <span>24-01-2025</span>
          </Stack>
        </TrayButton>
        <TrayButton aria-label="Notifications">
          <svg width="22" height="24" viewBox="0 0 22 24" fill="#ffe13b">
            <path d="M11 .5a8 8 0 0 1 8 8v6l2 3.500c.3.700 0 1.200-.7 1.200H1.700c-.7 0-1-.5-.7-1.200L3 14.500v-6a8 8 0 0 1 8-8zM7 20.500h8a4 3 0 0 1-8 0z" />
          </svg>
        </TrayButton>
      </Tray>
    </Taskbar>
  );
}

export default function App() {
  return (
    <Screen>
      <GlobalStyle />
      <Browser />
      <Editor>
        <LeftPanel />
        <CanvasArea />
        <RightPanel />
      </Editor>
      <WindowsTaskbar />
    </Screen>
  );
}
